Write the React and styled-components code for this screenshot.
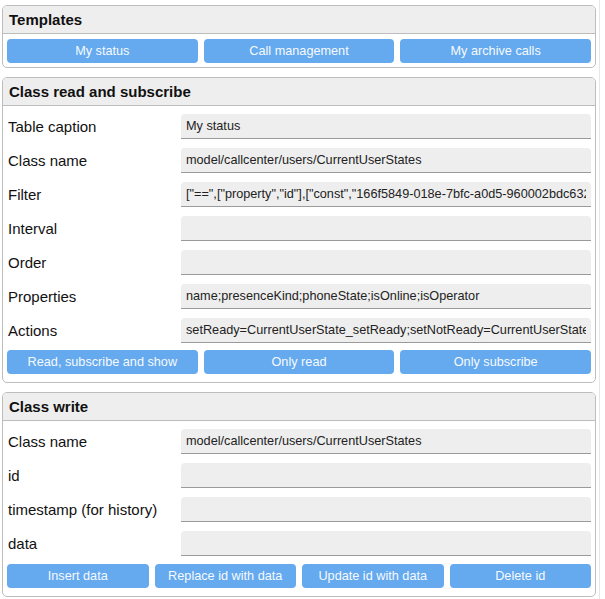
import styled, { createGlobalStyle } from "styled-components";

const GlobalStyle = createGlobalStyle`
  html, body {
    margin: 0;
    padding: 0;
    background: #fff;
  }
  body {
    font-family: "Liberation Sans", Arial, sans-serif;
    color: #111;
  }
`;

const Page = styled.div`
  width: 600px;
  min-height: 599px;
  box-sizing: border-box;
  padding: 5px 0 0 2px;
  border-right: 1px solid #e6e6e6;
  display: flex;
  flex-direction: column;
  gap: 9px;
`;

const Panel = styled.section`
  width: 594px;
  box-sizing: border-box;
  border: 1px solid #bdbdbd;
  border-radius: 5px;
  overflow: hidden;
`;

const PanelTitle = styled.h2`
  margin: 0;
  height: 27px;
  line-height: 27px;
  padding: 0 6px;
  font-size: 15px;
  font-weight: bold;
  background: #eeeeee;
  border-bottom: 1px solid #bdbdbd;
`;

const PanelBody = styled.div`
  padding: ${(p) => p.$pad || "5px 4px 4px"};
  display: flex;
  flex-direction: column;
  gap: 9px;
`;

const Row = styled.label`
  display: grid;
  grid-template-columns: 174px 1fr;
  align-items: center;
`;

const Label = styled.span`
  font-size: 15px;
  padding-left: 1px;
`;

const Field = styled.input`
  height: 25px;
  box-sizing: border-box;
  width: 100%;
  border: none;
  border-bottom: 1px solid #9a9a9a;
  border-radius: 4px 4px 0 0;
  background: #eeeeee;
  padding: 0 5px;
  font-family: "Liberation Sans", Arial, sans-serif;
  font-size: 12.7px;
  color: #222;
  outline: none;
`;

const ButtonRow = styled.div`
  display: grid;
  grid-template-columns: repeat(${(p) => p.$cols}, 1fr);
  gap: 6px;
  margin-top: ${(p) => p.$top || "0"};
`;

const Button = styled.button`
  height: 24px;
  border: none;
  border-radius: 4px;
  background: #65a9ee;
  color: #f6faff;
  font-family: "Liberation Sans", Arial, sans-serif;
  font-size: 12.7px;
  padding: 0;
  cursor: pointer;
`;

const readFields = [
  ["Table caption", "My status"],
  ["Class name", "model/callcenter/users/CurrentUserStates"],
  [
    "Filter",
    '["==",["property","id"],["const","166f5849-018e-7bfc-a0d5-960002bdc632"]]',
  ],
  ["Interval", ""],
  ["Order", ""],
  ["Properties", "name;presenceKind;phoneState;isOnline;isOperator"],
  [
    "Actions",
    "setReady=CurrentUserState_setReady;setNotReady=CurrentUserState_setNotReady",
  ],
];

const writeFields = [
  ["Class name", "model/callcenter/users/CurrentUserStates"],
  ["id", ""],
  ["timestamp (for history)", ""],
  ["data", ""],
];

const FormRows = ({ fields }) =>
  fields.map(([label, value]) => (
    <Row key={label}>
      <Label>{label}</Label>
      <Field readOnly value={value} />
    </Row>
  ));

export default function App() {
  return (
    <>
      <GlobalStyle />
      <Page>
        <Panel>
          <PanelTitle>Templates</PanelTitle>
          <PanelBody>
            <ButtonRow $cols={3}>
              <Button>My status</Button>
              <Button>Call management</Button>
              <Button>My archive calls</Button>
            </ButtonRow>
          </PanelBody>
        </Panel>

        <Panel>
          <PanelTitle>Class read and subscribe</PanelTitle>
          <PanelBody $pad="8px 4px 8px">
            <FormRows fields={readFields} />
            <ButtonRow $cols={3} $top="-2px">
              <Button>Read, subscribe and show</Button>
              <Button>Only read</Button>
              <Button>Only subscribe</Button>
            </ButtonRow>
          </PanelBody>
        </Panel>

        <Panel>
          <PanelTitle>Class write</PanelTitle>
          <PanelBody $pad="8px 4px 8px">
            <FormRows fields={writeFields} />
            <ButtonRow $cols={4} $top="-1px">
              <Button>Insert data</Button>
              <Button>Replace id with data</Button>
              <Button>Update id with data</Button>
              <Button>Delete id</Button>
            </ButtonRow>
          </PanelBody>
        </Panel>
      </Page>
    </>
  );
}
